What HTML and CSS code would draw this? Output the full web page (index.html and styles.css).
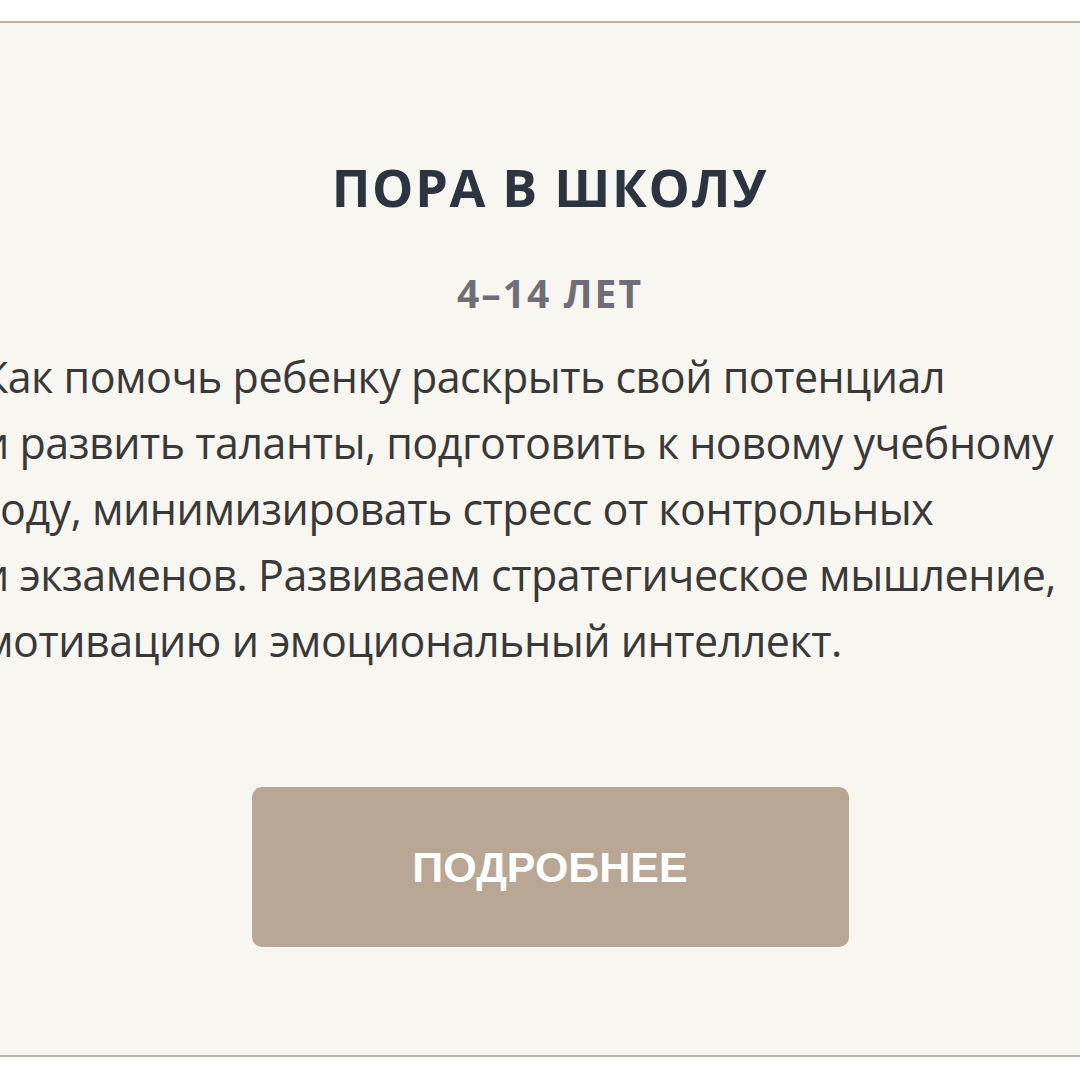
FILE: index.html
```html
<!DOCTYPE html>
<html lang="ru">
<head>
    <meta charset="UTF-8">
    <meta name="viewport" content="width=device-width, initial-scale=1.0">
    <title>Пора в школу</title>
    <link rel="stylesheet" href="styles.css">
</head>
<body>
    <div class="page">
        <div class="program-card">
            <h2 class="program-title">Пора в школу</h2>
            <div class="program-age">4–14 лет</div>
            <p class="program-text">
                Как помочь ребенку раскрыть свой потенциал<br>
                и&nbsp;развить таланты, подготовить к&nbsp;новому учебному<br>
                году, минимизировать стресс от&nbsp;контрольных<br>
                и&nbsp;экзаменов. Развиваем стратегическое мышление,<br>
                мотивацию и&nbsp;эмоциональный интеллект.
            </p>
            <a class="program-btn" href="#">Подробнее</a>
        </div>
    </div>
</body>
</html>
```

FILE: styles.css
```css
body {
    margin: 0;
    background: #ffffff;
    font-family: "Open Sans", "Noto Sans", sans-serif;
    overflow: hidden;
}

.page {
    padding-top: 21px;
}

/* карточка шире экрана, боковые края обрезаны */
.program-card {
    width: 1220px;
    margin-left: -60px;
    box-sizing: border-box;
    background: #f8f6f1;
    border-top: 2px solid #bdb5a8;
    border-bottom: 2px solid #bdb5a8;
    padding: 133px 0 108px;
    display: flex;
    flex-direction: column;
    align-items: center;
}

.program-title {
    margin: 0;
    font-size: 52px;
    line-height: 62px;
    font-weight: 700;
    letter-spacing: 1.7px;
    color: #2d3440;
    text-transform: uppercase;
}

.program-age {
    margin-top: 50px;
    font-size: 39px;
    line-height: 50px;
    font-weight: 700;
    letter-spacing: 2px;
    color: #6f6e78;
    text-transform: uppercase;
}

.program-text {
    width: 1136px;
    margin: 26px 0 0;
    font-size: 43px;
    line-height: 66px;
    letter-spacing: -0.5px;
    color: #3a3939;
    text-align: left;
}

.program-btn {
    margin-top: 113px;
    width: 597px;
    height: 160px;
    border-radius: 10px;
    background: #b7a794;
    color: #ffffff;
    font-family: "Liberation Sans", Arial, sans-serif;
    font-weight: 700;
    font-size: 43px;
    text-transform: uppercase;
    text-decoration: none;
    display: flex;
    align-items: center;
    justify-content: center;
}
```
